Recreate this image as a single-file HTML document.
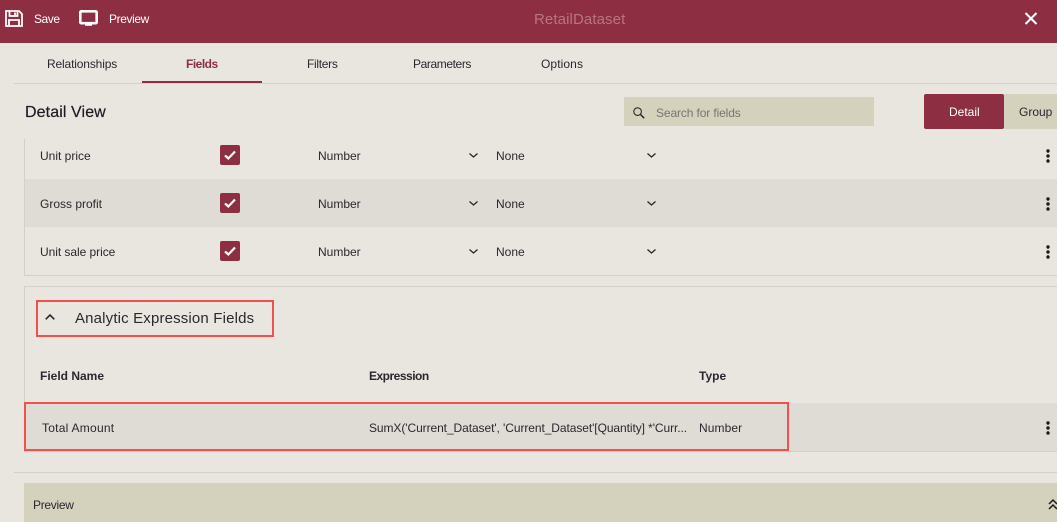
<!DOCTYPE html>
<html><head><meta charset="utf-8"><style>
html,body{margin:0;padding:0}
body{width:1057px;height:522px;overflow:hidden;position:relative;background:#e9e6df;font-family:"Liberation Sans",sans-serif;font-size:12px;color:#2b2730}
.a{position:absolute}
.t{position:absolute;white-space:nowrap;line-height:16px}
svg{position:absolute;overflow:visible}
.cb{position:absolute;left:220px;width:20px;height:20px;background:#8e2e42;border-radius:2px}
</style></head><body>
<div class="a" style="left:0;top:0;width:1057px;height:43px;background:#8e2e42"></div>
<svg style="left:5px;top:10px" width="18" height="17" viewBox="0 0 18 17" fill="none" stroke="#fff" stroke-width="1.8"><path d="M1 1H14L17 4V16H1Z"/><path d="M4.5 1.5V6H12.5V1.5"/><path d="M10 2.5V5"/><path d="M4 16V10H14V16"/></svg>
<div class="t" style="left:34px;top:11px;color:#fff;letter-spacing:-.45px">Save</div>
<svg style="left:79px;top:10px" width="19" height="16" viewBox="0 0 19 16" fill="none"><rect x="1.3" y="1.3" width="16.4" height="11.9" rx="1" stroke="#fff" stroke-width="2.6"/><path d="M6 15H13" stroke="#fff" stroke-width="1.6"/></svg>
<div class="t" style="left:109px;top:11px;color:#fff;letter-spacing:-.4px">Preview</div>
<div class="t" style="left:534px;top:12px;width:92px;font-size:15px;color:#b87581;letter-spacing:.1px">RetailDataset</div>
<svg style="left:1025px;top:13px" width="12" height="11" viewBox="0 0 12 11"><path d="M.5 0L11.5 11M11.5 0L.5 11" stroke="#fff" stroke-width="2"/></svg>

<div class="t" style="left:47px;top:56px;letter-spacing:-.15px">Relationships</div>
<div class="t" style="left:186px;top:56px;font-weight:bold;color:#8e2e42;letter-spacing:-.5px">Fields</div>
<div class="t" style="left:307px;top:56px;letter-spacing:-.3px">Filters</div>
<div class="t" style="left:413px;top:56px;letter-spacing:-.4px">Parameters</div>
<div class="t" style="left:541px;top:56px;letter-spacing:.1px">Options</div>
<div class="a" style="left:14px;top:83px;width:1043px;height:1px;background:#d3d0c9"></div>
<div class="a" style="left:142px;top:81px;width:120px;height:2px;background:#8e2e42"></div>

<div class="t" style="left:25px;top:104px;font-size:16px;line-height:18px;color:#1e1a25;letter-spacing:.1px;-webkit-text-stroke:.2px #1e1a25">Detail View</div>
<div class="a" style="left:624px;top:97px;width:250px;height:29px;background:#d4d1bd"></div>
<svg style="left:633px;top:107px" width="12" height="12" viewBox="0 0 12 12" fill="none" stroke="#2b2730"><circle cx="4.6" cy="4.6" r="3.8" stroke-width="1.1"/><path d="M7.4 7.4L11.2 11.2" stroke-width="1.5"/></svg>
<div class="t" style="left:656px;top:105px;color:#77756f;letter-spacing:-.12px">Search for fields</div>
<div class="a" style="left:924px;top:94px;width:80px;height:35px;background:#8e2e42;border-radius:2px"></div>
<div class="t" style="left:949px;top:104px;color:#fff">Detail</div>
<div class="a" style="left:1004px;top:94px;width:53px;height:35px;background:#d4d1bd"></div>
<div class="t" style="left:1019px;top:104px">Group</div>

<div class="a" style="left:24px;top:139px;width:1033px;height:136px;border-left:1px solid #d3d0c9;border-bottom:1px solid #d3d0c9"></div>
<div class="a" style="left:25px;top:179px;width:1032px;height:48px;background:#dfdcd5"></div>

<div class="t" style="left:40px;top:148px">Unit price</div>
<div class="cb" style="top:145px"></div><svg style="left:224px;top:150px" width="12" height="10" viewBox="0 0 12 10" fill="none"><path d="M1 5.5L4.3 8.5L11 1.5" stroke="#fff" stroke-width="2.2"/></svg>
<div class="t" style="left:318px;top:148px">Number</div>
<svg style="left:469px;top:153px" width="9" height="5" viewBox="0 0 9 5" fill="none"><path d="M.5 .5L4.5 4L8.5 .5" stroke="#2b2730" stroke-width="1.3"/></svg>
<div class="t" style="left:496px;top:148px">None</div>
<svg style="left:647px;top:153px" width="9" height="5" viewBox="0 0 9 5" fill="none"><path d="M.5 .5L4.5 4L8.5 .5" stroke="#2b2730" stroke-width="1.3"/></svg>
<svg style="left:1046px;top:149px" width="4" height="14" viewBox="0 0 4 14" fill="#1d1a20"><circle cx="2" cy="2" r="1.7"/><circle cx="2" cy="7" r="1.7"/><circle cx="2" cy="12" r="1.7"/></svg>

<div class="t" style="left:40px;top:196px">Gross profit</div>
<div class="cb" style="top:193px"></div><svg style="left:224px;top:198px" width="12" height="10" viewBox="0 0 12 10" fill="none"><path d="M1 5.5L4.3 8.5L11 1.5" stroke="#fff" stroke-width="2.2"/></svg>
<div class="t" style="left:318px;top:196px">Number</div>
<svg style="left:469px;top:201px" width="9" height="5" viewBox="0 0 9 5" fill="none"><path d="M.5 .5L4.5 4L8.5 .5" stroke="#2b2730" stroke-width="1.3"/></svg>
<div class="t" style="left:496px;top:196px">None</div>
<svg style="left:647px;top:201px" width="9" height="5" viewBox="0 0 9 5" fill="none"><path d="M.5 .5L4.5 4L8.5 .5" stroke="#2b2730" stroke-width="1.3"/></svg>
<svg style="left:1046px;top:197px" width="4" height="14" viewBox="0 0 4 14" fill="#1d1a20"><circle cx="2" cy="2" r="1.7"/><circle cx="2" cy="7" r="1.7"/><circle cx="2" cy="12" r="1.7"/></svg>

<div class="t" style="left:40px;top:244px;letter-spacing:-.05px">Unit sale price</div>
<div class="cb" style="top:241px"></div><svg style="left:224px;top:246px" width="12" height="10" viewBox="0 0 12 10" fill="none"><path d="M1 5.5L4.3 8.5L11 1.5" stroke="#fff" stroke-width="2.2"/></svg>
<div class="t" style="left:318px;top:244px">Number</div>
<svg style="left:469px;top:249px" width="9" height="5" viewBox="0 0 9 5" fill="none"><path d="M.5 .5L4.5 4L8.5 .5" stroke="#2b2730" stroke-width="1.3"/></svg>
<div class="t" style="left:496px;top:244px">None</div>
<svg style="left:647px;top:249px" width="9" height="5" viewBox="0 0 9 5" fill="none"><path d="M.5 .5L4.5 4L8.5 .5" stroke="#2b2730" stroke-width="1.3"/></svg>
<svg style="left:1046px;top:245px" width="4" height="14" viewBox="0 0 4 14" fill="#1d1a20"><circle cx="2" cy="2" r="1.7"/><circle cx="2" cy="7" r="1.7"/><circle cx="2" cy="12" r="1.7"/></svg>

<div class="a" style="left:24px;top:286px;width:1033px;height:165px;border-left:1px solid #d3d0c9;border-top:1px solid #d3d0c9"></div>
<div class="a" style="left:36px;top:300px;width:234px;height:33px;border:2px solid #f05050"></div>
<svg style="left:45px;top:314px" width="10" height="6" viewBox="0 0 10 6" fill="none"><path d="M.7 5.3L5 1L9.3 5.3" stroke="#2b2730" stroke-width="1.6"/></svg>
<div class="t" style="left:75px;top:310px;font-size:15px;line-height:18px;letter-spacing:.16px">Analytic Expression Fields</div>

<div class="t" style="left:40px;top:368px;font-weight:bold">Field Name</div>
<div class="t" style="left:369px;top:368px;font-weight:bold;letter-spacing:-.5px">Expression</div>
<div class="t" style="left:699px;top:368px;font-weight:bold">Type</div>

<div class="a" style="left:25px;top:403px;width:1032px;height:49px;background:#dfdcd5;border-bottom:1px solid #d3d0c9;box-sizing:border-box"></div>
<div class="a" style="left:24px;top:402px;width:761px;height:45px;border:2px solid #f05050"></div>
<div class="t" style="left:42px;top:420px;letter-spacing:.25px">Total Amount</div>
<div class="t" style="left:369px;top:420px;letter-spacing:-.08px">SumX('Current_Dataset', 'Current_Dataset'[Quantity] *'Curr...</div>
<div class="t" style="left:699px;top:420px;letter-spacing:.1px">Number</div>
<svg style="left:1046px;top:421px" width="4" height="14" viewBox="0 0 4 14" fill="#1d1a20"><circle cx="2" cy="2" r="1.7"/><circle cx="2" cy="7" r="1.7"/><circle cx="2" cy="12" r="1.7"/></svg>

<div class="a" style="left:14px;top:472px;width:1043px;height:1px;background:#d3d0c9"></div>
<div class="a" style="left:24px;top:483px;width:1033px;height:39px;background:#d4d1bd"></div>
<div class="t" style="left:33px;top:497px;letter-spacing:-.3px">Preview</div>
<svg style="left:1048px;top:499px" width="10" height="11" viewBox="0 0 10 11" fill="none"><path d="M1 5L5 1L9 5M1 10L5 6L9 10" stroke="#1d1a20" stroke-width="1.5"/></svg>
</body></html>
